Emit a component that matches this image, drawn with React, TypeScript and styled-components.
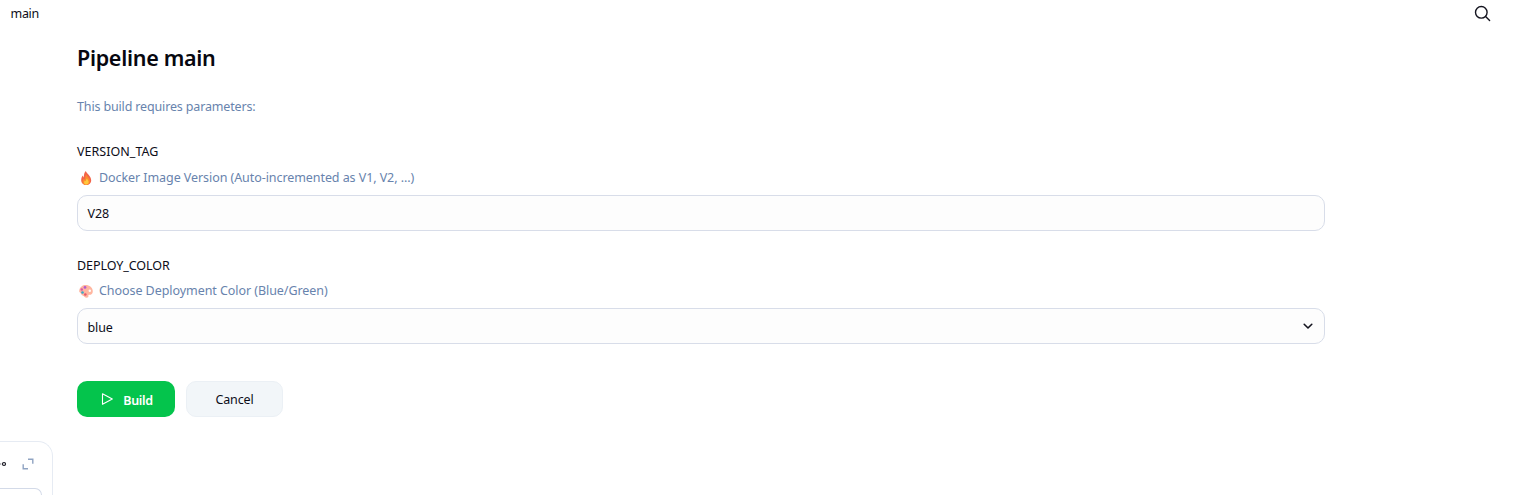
import React from "react";
import styled, { createGlobalStyle } from "styled-components";

const Global = createGlobalStyle`
  *, *::before, *::after { box-sizing: border-box; }
  body {
    margin: 0;
    background: #fff;
    color: #0d0d18;
    font: 13px/18px "Noto Sans", "Open Sans", sans-serif;
    overflow: hidden;
  }
`;

const Page = styled.div`
  display: flex;
  flex-direction: column;
  height: 495px;
  overflow: hidden;
`;

const TopBar = styled.header`
  display: flex;
  align-items: center;
  justify-content: space-between;
  height: 27px;
  padding: 0 21px 0 10.5px;
`;

const Crumb = styled.span`
  font-size: 12.5px;
  letter-spacing: -0.3px;
`;

const SearchIcon = styled.svg`
  width: 18px;
  height: 18px;
`;

const Body = styled.div`
  display: flex;
  flex: 1;
  min-height: 0;
`;

const Side = styled.aside`
  display: flex;
  flex-direction: column;
  justify-content: flex-end;
  width: 53px;
  margin-right: 24px;
`;

const SideCard = styled.div`
  display: flex;
  flex-direction: column;
  height: 54px;
  border: 1px solid #e6ebf3;
  border-width: 1px 1px 0 0;
  border-top-right-radius: 15px;
`;

const SideTools = styled.div`
  display: flex;
  align-items: center;
  justify-content: space-between;
  height: 46px;
  padding: 0 18px 2px 0;
`;

const SideInput = styled.div`
  flex: 1;
  margin-right: 10px;
  border: 1px solid #d3dae8;
  border-width: 1px 1px 0 0;
  border-top-right-radius: 10px;
`;

const Main = styled.main`
  width: 1248px;
`;

const Title = styled.h1`
  margin: 17px 0 0;
  font-size: 21.5px;
  line-height: 28px;
  font-weight: 600;
  letter-spacing: -0.3px;
  color: #07070f;
`;

const Muted = styled.p<{ $top?: number; $spacing: number }>`
  display: flex;
  align-items: center;
  height: 18px;
  margin: ${(p) => p.$top ?? 0}px 0 0;
  color: #6883ad;
  font-size: 12.5px;
  letter-spacing: ${(p) => p.$spacing}px;
`;

const Field = styled.section<{ $top: number; $gap: number }>`
  display: flex;
  flex-direction: column;
  gap: ${(p) => p.$gap}px;
  margin-top: ${(p) => p.$top}px;
`;

const Label = styled.label<{ $spacing: number }>`
  height: 18px;
  font-size: 12.5px;
  letter-spacing: ${(p) => p.$spacing}px;
`;

const Control = styled.div<{ $select?: boolean }>`
  display: flex;
  align-items: center;
  justify-content: space-between;
  height: 36px;
  margin-top: ${(p) => (p.$select ? 1 : 0)}px;
  padding: ${(p) => (p.$select ? 3 : 1)}px 10px 0 9.5px;
  border: 1px solid #d8dde9;
  border-radius: 10px;
  background: #fdfdfd;
  font-size: 12.5px;
  letter-spacing: -0.1px;
`;

const Chevron = styled.svg`
  width: 12px;
  height: 12px;
  margin-bottom: 3px;
`;

const Emoji = styled.svg`
  width: 16px;
  height: 16px;
  margin: 0 5px 0 1px;
`;

const Actions = styled.div`
  display: flex;
  gap: 11px;
  margin-top: 37px;
`;

const Button = styled.button<{ $primary?: boolean }>`
  display: flex;
  align-items: center;
  justify-content: center;
  gap: 9px;
  height: 36px;
  width: ${(p) => (p.$primary ? 98 : 97)}px;
  padding: ${(p) => (p.$primary ? "3px 0 0 2px" : "2px 0 0")};
  border: ${(p) => (p.$primary ? "0" : "1px solid #ebf0f5")};
  border-radius: 10px;
  background: ${(p) => (p.$primary ? "#04c44c" : "#f2f6f9")};
  color: ${(p) => (p.$primary ? "#fff" : "#0d0d18")};
  font: ${(p) => (p.$primary ? 600 : 400)} 12.5px/18px "Noto Sans", sans-serif;
  letter-spacing: ${(p) => (p.$primary ? -0.35 : -0.15)}px;
`;

const PlayIcon = styled.svg`
  width: 13px;
  height: 14px;
  margin-bottom: 3px;
`;

const Flame = () => (
  <Emoji viewBox="0 0 16 16">
    <path d="M7.800 1C8.200 3 13.200 6 13.200 10.200c0 3-2.200 4.800-4.900 4.800S3.200 13.100 3.200 10.200c0-2.200.8-3.800 1.800-4.700.2 1 .5 1.500 1 1.900C5.700 4.800 6.300 2.500 7.800 1Z" fill="#f2644a" />
    <path d="M8.500 4.500c.2 2.200 3.500 3.300 3.500 6.500 0 2.400-1.700 4-3.900 4S4.500 13.500 4.500 11.500c0-1.500.8-2.500 1.500-3 .2.800.6 1.200 1.200 1.300C7 7.800 7.400 5.800 8.500 4.500Z" fill="#fb8b2e" />
    <path d="M9 8.500c.2 1.200 1.700 1.800 1.700 3.600 0 1.500-1 2.500-2.300 2.500s-2.300-.9-2.300-2.200c0-.9.4-1.500.8-1.800.2.500.5.7.9.7C7.800 10.200 8.300 9.100 9 8.500Z" fill="#ffc83d" />
  </Emoji>
);

const Palette = () => (
  <Emoji viewBox="0 0 16 16">
    <path d="M7.600 2C11.600 2 14.800 4.600 14.800 8.200c0 2.700-1.600 3.600-3.300 3.600-.9 0-1.300.5-1.100 1.200.3 1.100-.6 1.700-1.900 1.700-1.700 0-2-1.300-3.500-1.900C3 12.100 3.200 10.600 2.300 9.800 1.300 9 .9 8.300 1.300 7.200 1.900 4 4.500 2 7.600 2Z" fill="#ffb6a0" />
    <circle cx="11.800" cy="7.800" r="1.200" fill="#fff" />
    <circle cx="7" cy="4.400" r="1.400" fill="#b45ccc" />
    <circle cx="3.800" cy="6.500" r="1.200" fill="#d955a8" />
    <circle cx="4.500" cy="9.500" r="1.300" fill="#35a9c9" />
    <circle cx="7.300" cy="11.500" r="1.300" fill="#e8576c" />
  </Emoji>
);

export default function App() {
  return (
    <>
      <Global />
      <Page>
        <TopBar>
          <Crumb>main</Crumb>
          <SearchIcon viewBox="0 0 18 18" fill="none" stroke="#14141f" strokeWidth="1.400" strokeLinecap="round">
            <circle cx="7.300" cy="7.300" r="5.800" />
            <path d="M11.600 11.600 15.600 15.600" />
          </SearchIcon>
        </TopBar>
        <Body>
          <Side>
            <SideCard>
              <SideTools>
                <svg width="8" height="8" viewBox="0 0 8 8" fill="none" stroke="#14141f">
                  <path d="M0 4h1.300" stroke="#777783" />
                  <circle cx="4" cy="4" r="1.500" strokeWidth="1.200" />
                </svg>
                <svg width="12" height="12" viewBox="0 0 12 12" fill="none" stroke="#8fa3c2" strokeWidth="1.400">
                  <path d="M6 1.200h4.800v4.500M1.200 6.300v4.500H6" />
                </svg>
              </SideTools>
              <SideInput />
            </SideCard>
          </Side>
          <Main>
            <Title>Pipeline main</Title>
            <Muted $top={26} $spacing={-0.15}>This build requires parameters:</Muted>
            <Field $top={27} $gap={8}>
              <Label $spacing={0.03}>VERSION_TAG</Label>
              <Muted $spacing={-0.07}><Flame />Docker Image Version (Auto-incremented as V1, V2, ...)</Muted>
              <Control>V28</Control>
            </Field>
            <Field $top={26} $gap={7}>
              <Label $spacing={-0.06}>DEPLOY_COLOR</Label>
              <Muted $spacing={-0.06}><Palette />Choose Deployment Color (Blue/Green)</Muted>
              <Control $select>
                blue
                <Chevron viewBox="0 0 12 12" fill="none" stroke="#14141f" strokeWidth="1.600" strokeLinecap="round" strokeLinejoin="round">
                  <path d="M2.200 4.300 6 8 9.800 4.300" />
                </Chevron>
              </Control>
            </Field>
            <Actions>
              <Button $primary>
                <PlayIcon viewBox="0 0 13 14" fill="none" stroke="#fff" strokeWidth="1.100" strokeLinejoin="round">
                  <path d="M1.500 1.700 11.300 7 1.500 12.300Z" />
                </PlayIcon>
                Build
              </Button>
              <Button>Cancel</Button>
            </Actions>
          </Main>
        </Body>
      </Page>
    </>
  );
}
